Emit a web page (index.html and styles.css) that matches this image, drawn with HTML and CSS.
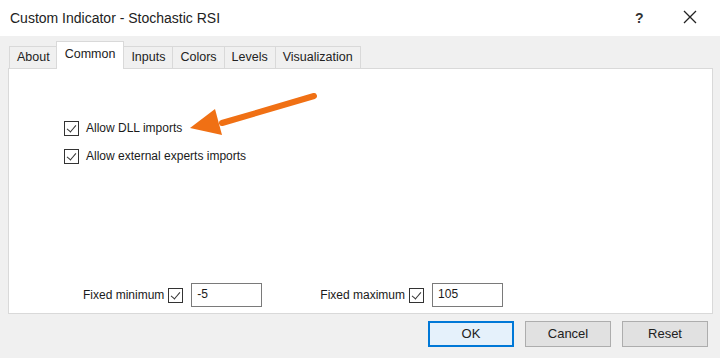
FILE: index.html
```html
<!DOCTYPE html>
<html lang="en">
<head>
    <meta charset="UTF-8">
    <title>Custom Indicator - Stochastic RSI</title>
    <link rel="stylesheet" href="styles.css">
</head>
<body>
    <div class="dialog">
        <div class="titlebar">
            <span class="title">Custom Indicator - Stochastic RSI</span>
            <span class="help">?</span>
            <span class="close">
                <svg width="14" height="14" viewBox="0 0 14 14"><path d="M1 1L13 13M13 1L1 13" stroke="#222" stroke-width="1.3" fill="none"/></svg>
            </span>
        </div>

        <div class="body">
            <div class="tabs">
                <div class="tab">About</div>
                <div class="tab active">Common</div>
                <div class="tab">Inputs</div>
                <div class="tab">Colors</div>
                <div class="tab">Levels</div>
                <div class="tab">Visualization</div>
            </div>

            <div class="panel">
                <div class="options">
                    <label class="check-row"><span class="box checked"></span>Allow DLL imports</label>
                    <label class="check-row"><span class="box checked"></span>Allow external experts imports</label>
                </div>

                <div class="fixed-row">
                    <div class="fixed">
                        <span>Fixed minimum</span>
                        <span class="box checked"></span>
                        <span class="field">-5</span>
                    </div>
                    <div class="fixed">
                        <span>Fixed maximum</span>
                        <span class="box checked"></span>
                        <span class="field">105</span>
                    </div>
                </div>
            </div>

            <div class="buttons">
                <div class="btn default">OK</div>
                <div class="btn">Cancel</div>
                <div class="btn">Reset</div>
            </div>
        </div>

        <!-- annotation arrow -->
        <svg class="arrow" width="140" height="50" viewBox="0 0 140 50">
            <path d="M132 6L40 33" stroke="#f07014" stroke-width="6" stroke-linecap="round" fill="none"/>
            <polygon points="8,38 33,19 40,45" fill="#f07014"/>
        </svg>
    </div>
</body>
</html>
```

FILE: styles.css
```css
body {
    margin: 0;
    font-family: "Liberation Sans", Arial, sans-serif;
    color: #1a1a1a;
    background: #f0f0f0;
}
.dialog {
    position: relative;
    width: 720px;
    height: 358px;
    background: #f0f0f0;
    overflow: hidden;
}
.titlebar {
    height: 36px;
    background: #fff;
    display: flex;
    align-items: center;
    padding-left: 10px;
    font-size: 14px;
    color: #222;
}
.title {
    flex: 1;
}
.help {
    width: 48px;
    font-size: 14px;
    font-weight: bold;
    color: #333;
}
.close {
    width: 37px;
}
.body {
    padding: 6px 7px 0 8px;
}
.tabs {
    display: flex;
    align-items: flex-end;
    padding-left: 1px;
    height: 26px;
    position: relative;
    z-index: 1;
}
.tab {
    height: 21px;
    line-height: 21px;
    padding: 0 7px;
    font-size: 12.5px;
    border: 1px solid #d9d9d9;
    border-bottom: none;
    background: #f0f0f0;
    margin-right: -1px;
    color: #222;
}
.tab.active {
    line-height: 24px;
    background: #fff;
    padding: 0 8px;
    margin: 0 -1px -1px -1px;
    position: relative;
    z-index: 2;
    height: 27px;
}
.panel {
    background: #fff;
    border: 1px solid #d9d9d9;
    height: 244px;
    display: flex;
    flex-direction: column;
    font-size: 12px;
}
.options {
    padding: 52px 0 0 55px;
    display: flex;
    flex-direction: column;
    gap: 14px;
}
.check-row {
    display: flex;
    align-items: center;
    height: 14px;
}
.box {
    display: inline-block;
    width: 13px;
    height: 13px;
    border: 1px solid #333;
    background: #fff;
    margin-right: 7px;
    position: relative;
    flex-shrink: 0;
}
.box.checked::after {
    content: "";
    position: absolute;
    left: 4px;
    top: 1px;
    width: 4px;
    height: 8px;
    border: solid #333;
    border-width: 0 1.5px 1.5px 0;
    transform: rotate(40deg);
}
.fixed-row {
    margin-top: auto;
    display: flex;
    padding: 0 0 6px 74px;
    gap: 58px;
}
.fixed {
    display: flex;
    align-items: center;
}
.fixed span:first-child {
    margin-right: 4px;
}
.fixed .box {
    margin-right: 8px;
}
.field {
    width: 64px;
    height: 22px;
    line-height: 21px;
    border: 1px solid #7a7a7a;
    padding-left: 5px;
    font-size: 12px;
}
.buttons {
    display: flex;
    justify-content: flex-end;
    gap: 11px;
    padding: 7px 5px 0 0;
}
.btn {
    width: 84px;
    height: 24px;
    line-height: 24px;
    text-align: center;
    border: 1px solid #adadad;
    background: #e1e1e1;
    font-size: 13px;
    color: #222;
}
.btn.default {
    border: 2px solid #0078d7;
    width: 82px;
    height: 22px;
    line-height: 22px;
    background: #e5f1fb;
}
.arrow {
    position: absolute;
    left: 182px;
    top: 90px;
}
```
